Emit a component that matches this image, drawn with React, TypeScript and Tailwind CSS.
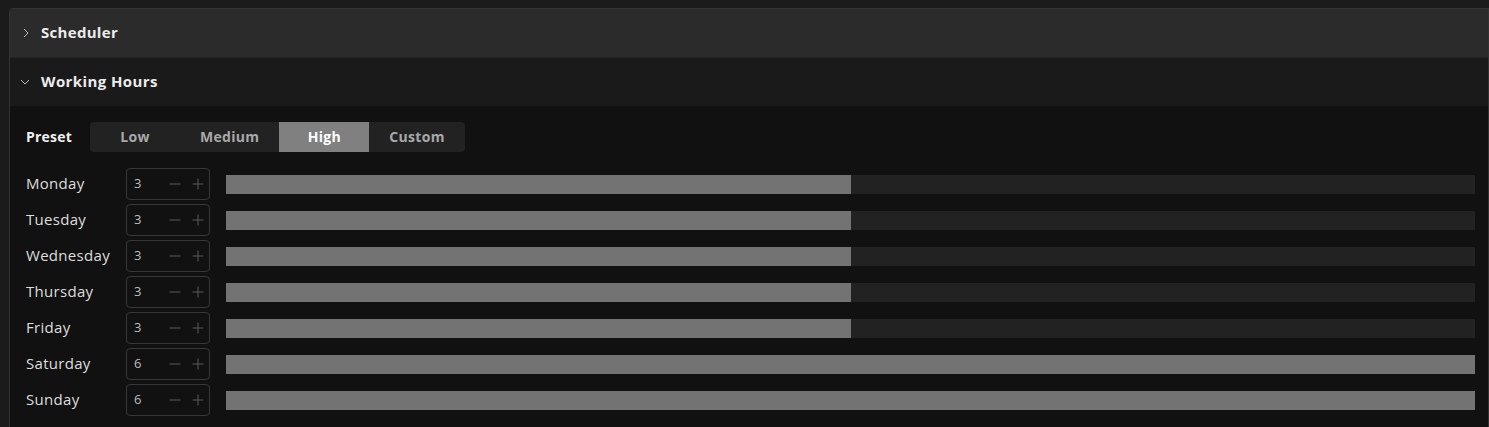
import React from "react";

const days: [string, number][] = [
  ["Monday", 3],
  ["Tuesday", 3],
  ["Wednesday", 3],
  ["Thursday", 3],
  ["Friday", 3],
  ["Saturday", 6],
  ["Sunday", 6],
];

const presets = ["Low", "Medium", "High", "Custom"];

function ChevronRight() {
  return (
    <svg width="8" height="10" viewBox="0 0 8 10" className="shrink-0">
      <path d="M2 1 L6 5 L2 9" fill="none" stroke="#bdbdbd" strokeWidth="1" />
    </svg>
  );
}

function ChevronDown() {
  return (
    <svg width="10" height="8" viewBox="0 0 10 8" className="shrink-0">
      <path d="M1 2 L5 6 L9 2" fill="none" stroke="#bdbdbd" strokeWidth="1" />
    </svg>
  );
}

function Minus() {
  return (
    <svg width="12" height="12" viewBox="0 0 12 12">
      <path d="M0.5 6 H11.5" stroke="#5a5a5a" strokeWidth="1" />
    </svg>
  );
}

function Plus() {
  return (
    <svg width="12" height="12" viewBox="0 0 12 12">
      <path d="M0.5 6 H11.5 M6 0.5 V11.5" stroke="#5a5a5a" strokeWidth="1" />
    </svg>
  );
}

export default function App() {
  return (
    <div
      className="w-[1489px] h-[427px] overflow-hidden bg-[#1b1b1b] pt-[8px] pl-[9px]"
      style={{ fontFamily: '"Open Sans", "Noto Sans", sans-serif' }}
    >
      <div className="w-[1480px] h-[430px] border border-[#333333] border-b-0 rounded-tl-[4px] overflow-hidden flex flex-col bg-[#111111]">
        <div className="h-[49px] shrink-0 bg-[#2b2b2b] border-b border-[#242424] flex items-center pl-[12px] gap-[11px]">
          <ChevronRight />
          <span className="text-[15px] font-bold text-[#ececec] tracking-[0.3px] pb-[2px]">Scheduler</span>
        </div>
        <div className="h-[48px] shrink-0 bg-[#1a1a1a] flex items-center pl-[10px] gap-[11px]">
          <ChevronDown />
          <span className="text-[15px] font-bold text-[#ececec] tracking-[0.4px] pb-[2px]">Working Hours</span>
        </div>
        <div className="pl-[16px] pr-[13px] pt-[16px] flex flex-col">
          <div className="flex items-center h-[30px]">
            <span className="w-[64px] text-[14px] font-bold text-[#f0f0f0] tracking-[0.2px] pb-[2px]">Preset</span>
            <div className="flex h-[30px] bg-[#222222] rounded-[4px] overflow-hidden">
              {presets.map((p) => (
                <div
                  key={p}
                  className={
                    p === "High"
                      ? "min-w-[90px] px-5 pb-[2px] flex items-center justify-center text-[14px] font-bold tracking-[0.3px] bg-[#808080] text-white"
                      : "min-w-[90px] px-5 pb-[2px] flex items-center justify-center text-[14px] font-bold tracking-[0.3px] text-[#a8a8a8]"
                  }
                >
                  {p}
                </div>
              ))}
            </div>
          </div>
          <div className="flex flex-col gap-[4px] mt-[16px]">
            {days.map(([d, v]) => (
              <div key={d} className="flex items-center h-[32px]">
                <span className="w-[100px] text-[15px] text-[#dedede] tracking-[0.3px] pb-[2px]">{d}</span>
                <div className="w-[84px] h-[32px] border border-[#363636] rounded-[4px] flex items-center pl-[7px] pr-[5px]">
                  <span className="text-[13px] text-[#bdbdbd] flex-1">{v}</span>
                  <div className="flex items-center gap-[11px]">
                    <Minus />
                    <Plus />
                  </div>
                </div>
                <div className="ml-[16px] flex-1 h-[19px] bg-[#222222]">
                  <div className="h-full bg-[#737373]" style={{ width: `${(v / 6) * 100}%` }} />
                </div>
              </div>
            ))}
          </div>
        </div>
      </div>
    </div>
  );
}
